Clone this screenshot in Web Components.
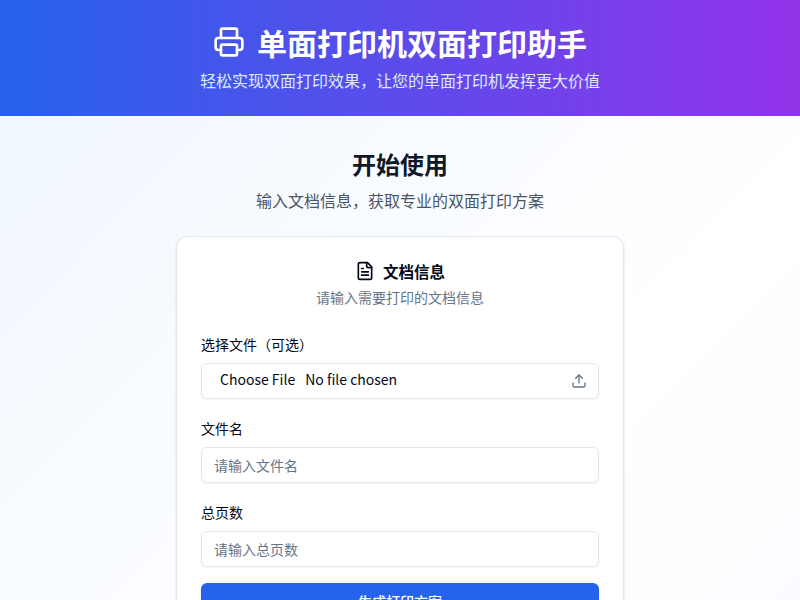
<!DOCTYPE html>
<html lang="zh-CN">
<head>
<meta charset="utf-8">
<title>单面打印机双面打印助手</title>
<style>
html,body{margin:0;padding:0;height:100%;overflow:hidden}
body{font-family:"Noto Sans CJK SC","Noto Sans",sans-serif;color:#0f172a;background:linear-gradient(135deg,#eff6ff 0%,#ffffff 50%,#faf5ff 100%) 0 0/100% 1200px no-repeat #fff;}
</style>
</head>
<body>
<app-header heading="单面打印机双面打印助手" sub="轻松实现双面打印效果&#xFF0C;让您的单面打印机发挥更大价值"></app-header>
<app-main>
  <intro-block heading="开始使用" sub="输入文档信息&#xFF0C;获取专业的双面打印方案"></intro-block>
  <doc-card heading="文档信息" sub="请输入需要打印的文档信息">
    <form-field label="选择文件&#xFF08;可选&#xFF09;"><file-input></file-input></form-field>
    <form-field label="文件名"><text-input placeholder="请输入文件名"></text-input></form-field>
    <form-field label="总页数"><text-input placeholder="请输入总页数" type="number"></text-input></form-field>
    <primary-button>生成打印方案</primary-button>
  </doc-card>
</app-main>
<script>
const svg=(size,body,sw=2)=>`<svg xmlns="http://www.w3.org/2000/svg" width="${size}" height="${size}" viewBox="0 0 24 24" fill="none" stroke="currentColor" stroke-width="${sw}" stroke-linecap="round" stroke-linejoin="round">${body}</svg>`;
const ICONS={
 printer:'<path d="M6 18H4a2 2 0 0 1-2-2v-5a2 2 0 0 1 2-2h16a2 2 0 0 1 2 2v5a2 2 0 0 1-2 2h-2"/><path d="M6 9V3a1 1 0 0 1 1-1h10a1 1 0 0 1 1 1v6"/><rect x="6" y="14" width="12" height="8" rx="1"/>',
 file:'<path d="M15 2H6a2 2 0 0 0-2 2v16a2 2 0 0 0 2 2h12a2 2 0 0 0 2-2V7Z"/><path d="M14 2v4a2 2 0 0 0 2 2h4"/><path d="M10 9H8"/><path d="M16 13H8"/><path d="M16 17H8"/>',
 upload:'<path d="M21 15v4a2 2 0 0 1-2 2H5a2 2 0 0 1-2-2v-4"/><polyline points="17 8 12 3 7 8"/><line x1="12" y1="3" x2="12" y2="15"/>'
};
class Base extends HTMLElement{
  constructor(){super();this.attachShadow({mode:'open'});}
  connectedCallback(){this.shadowRoot.innerHTML=this.render();}
  a(n){return this.getAttribute(n)||'';}
}
customElements.define('app-header',class extends Base{render(){return `<style>
:host{display:block;background:linear-gradient(to right,#2563eb,#9333ea);color:#fff;padding:24px 16px;text-align:center}
.t{display:flex;align-items:center;justify-content:center;gap:12px;margin-bottom:8px}
h1{margin:0;font-size:30px;line-height:36px;font-weight:700}
svg{display:block}
p{margin:0;font-size:16px;line-height:24px;color:#dbeafe}
</style><div class="t">${svg(32,ICONS.printer)}<h1>${this.a('heading')}</h1></div><p>${this.a('sub')}</p>`}});
customElements.define('app-main',class extends Base{render(){return `<style>
:host{display:block;padding:32px 16px}
</style><slot></slot>`}});
customElements.define('intro-block',class extends Base{render(){return `<style>
:host{display:block;text-align:center;margin-bottom:24px}
h2{margin:0 0 8px;font-size:24px;line-height:32px;font-weight:700;color:#111827}
p{margin:0;font-size:16px;line-height:24px;color:#4b5563}
</style><h2>${this.a('heading')}</h2><p>${this.a('sub')}</p>`}});
customElements.define('doc-card',class extends Base{render(){return `<style>
:host{display:block;box-sizing:border-box;width:448px;margin:0 auto;background:#fff;border:1px solid #e2e8f0;border-radius:12px;box-shadow:0 1px 3px rgba(0,0,0,.1),0 1px 2px -1px rgba(0,0,0,.1);padding:24px}
.h{text-align:center;margin-bottom:27px}
.t{display:flex;align-items:center;justify-content:center;gap:8px;font-size:15.5px;line-height:20px;font-weight:700;color:#020817;margin-bottom:6px}
svg{display:block}
p{margin:0;font-size:14px;line-height:20px;color:#64748b}
.b{display:flex;flex-direction:column;gap:19px}
</style><div class="h"><div class="t">${svg(20,ICONS.file)}<span>${this.a('heading')}</span></div><p>${this.a('sub')}</p></div><div class="b"><slot></slot></div>`}});
customElements.define('form-field',class extends Base{render(){return `<style>
:host{display:block}
label{display:block;font-size:14px;line-height:20px;font-weight:400;color:#020817;margin-bottom:9px}
</style><label>${this.a('label')}</label><slot></slot>`}});
customElements.define('file-input',class extends Base{render(){return `<style>
:host{display:flex;align-items:center;box-sizing:border-box;height:36px;border:1px solid #e2e8f0;border-radius:6px;background:#fff;box-shadow:0 1px 2px rgba(0,0,0,.05);padding:0 11px 0 18px;font-size:14px;line-height:20px;color:#020817}
.b{margin-right:10px}
.n{flex:1}
.b,.n{margin-top:-5px}
svg{display:block;color:#64748b}
</style><span class="b">Choose File</span><span class="n">No file chosen</span>${svg(16,ICONS.upload)}`}});
customElements.define('text-input',class extends Base{render(){return `<style>
:host{display:block}
input{display:block;box-sizing:border-box;width:100%;height:36px;border:1px solid #e2e8f0;border-radius:6px;background:#fff;box-shadow:0 1px 2px rgba(0,0,0,.05);padding:0 12px;font:14px/20px "Noto Sans CJK SC","Noto Sans",sans-serif;color:#020817;outline:none;-moz-appearance:textfield;appearance:textfield}
input::placeholder{color:#64748b;opacity:1}
</style><input type="${this.a('type')||'text'}" placeholder="${this.a('placeholder')}">`}});
customElements.define('primary-button',class extends Base{render(){return `<style>
:host{display:block;margin-top:-3px}
button{display:block;width:100%;height:36px;border:0;border-radius:6px;background:#2563eb;color:#fff;font:500 14px/20px "Noto Sans CJK SC","Noto Sans",sans-serif;box-shadow:0 1px 3px rgba(0,0,0,.1)}
</style><button><slot></slot></button>`}});
</script>
</body>
</html>
